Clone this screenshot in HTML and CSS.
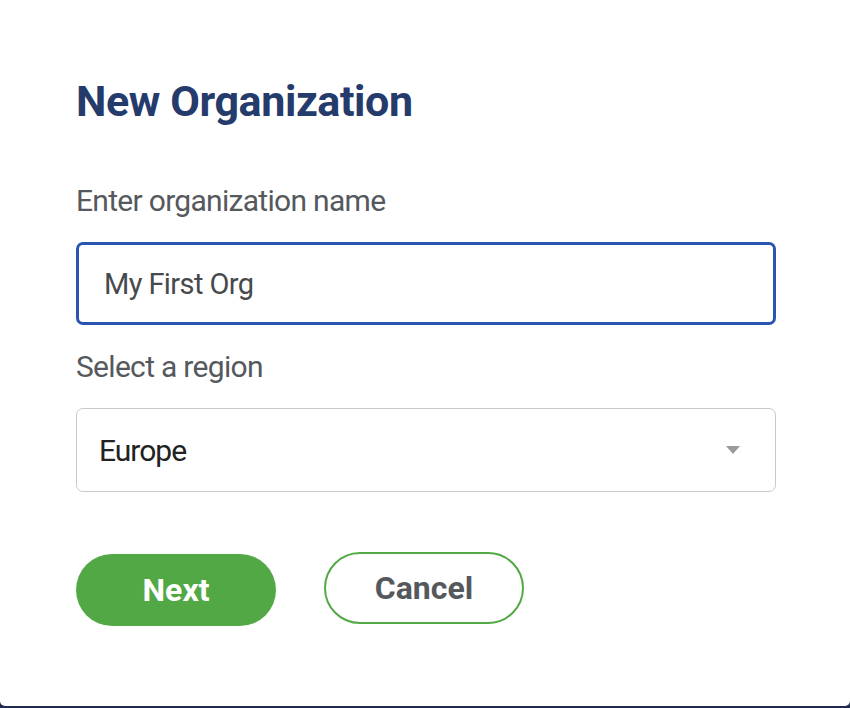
FILE: index.html
```html
<!DOCTYPE html>
<html>
<head>
<meta charset="utf-8">
<link rel="stylesheet" href="styles.css">
</head>
<body>
<div class="modal">
  <h1 class="title">New Organization</h1>
  <div class="field-label first">Enter organization name</div>
  <div class="input">My First Org</div>
  <div class="field-label">Select a region</div>
  <div class="select">
    <span class="select-value">Europe</span>
    <span class="caret"></span>
  </div>
  <div class="actions">
    <button class="btn btn-primary">Next</button>
    <button class="btn btn-secondary">Cancel</button>
  </div>
</div>
</body>
</html>
```
FILE: styles.css
```css
html, body {
  margin: 0;
  padding: 0;
}
body {
  background: #1f2c4e;
  font-family: Roboto, "Noto Sans", sans-serif;
  width: 850px;
  height: 708px;
  overflow: hidden;
}
.modal {
  box-sizing: border-box;
  width: 850px;
  height: 706px;
  background: #ffffff;
  border-radius: 0 0 5px 5px;
  padding: 75px 74px 0 76px;
}
.title {
  margin: 0;
  font-size: 43px;
  line-height: 52px;
  font-weight: 700;
  letter-spacing: -0.4px;
  color: #243b6b;
}
.field-label {
  font-size: 30px;
  line-height: 40px;
  letter-spacing: -0.7px;
  color: #55595d;
  margin-top: 22px;
}
.field-label.first {
  margin-top: 54px;
}
.input {
  box-sizing: border-box;
  margin-top: 21px;
  height: 83px;
  border: 3px solid #2954b1;
  border-radius: 7px;
  padding-left: 25px;
  display: flex;
  align-items: center;
  font-size: 29px;
  letter-spacing: -0.6px;
  color: #474a4d;
}
.select {
  box-sizing: border-box;
  margin-top: 21px;
  height: 84px;
  border: 1px solid #c9cacd;
  border-radius: 7px;
  padding: 0 35px 0 22px;
  display: flex;
  align-items: center;
  justify-content: space-between;
  font-size: 30px;
  letter-spacing: -1px;
  color: #222222;
}
.caret {
  width: 0;
  height: 0;
  border-left: 7px solid transparent;
  border-right: 7px solid transparent;
  border-top: 8px solid #9a9a9a;
}
.actions {
  display: flex;
  align-items: flex-start;
  gap: 48px;
  margin-top: 60px;
}
.btn {
  box-sizing: border-box;
  width: 200px;
  height: 72px;
  border-radius: 36px;
  font-family: Roboto, "Noto Sans", sans-serif;
  font-size: 32px;
  font-weight: 700;
  padding: 0;
  cursor: pointer;
}
.btn-primary {
  margin-top: 2px;
  background: #52a844;
  border: none;
  color: #ffffff;
}
.btn-secondary {
  background: #ffffff;
  border: 2px solid #52a844;
  color: #55595d;
}
```
